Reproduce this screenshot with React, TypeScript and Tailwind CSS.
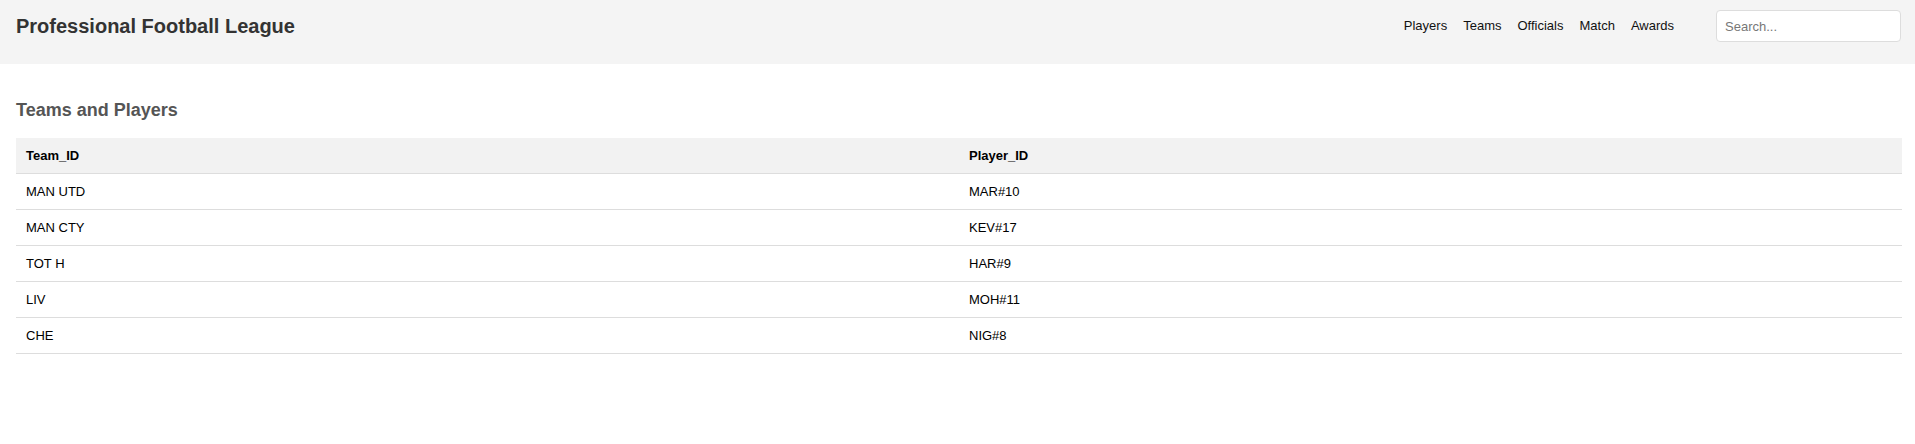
const rows = [
  { team: "MAN UTD", player: "MAR#10" },
  { team: "MAN CTY", player: "KEV#17" },
  { team: "TOT H", player: "HAR#9" },
  { team: "LIV", player: "MOH#11" },
  { team: "CHE", player: "NIG#8" },
];

const links = ["Players", "Teams", "Officials", "Match", "Awards"];

export default function App() {
  return (
    <div className="min-h-screen bg-white font-['Liberation_Sans',Arial,sans-serif]">
      <header className="h-16 bg-[#f4f4f4] pl-4 pr-[14px] pt-[10px]">
        <div className="flex h-8 items-center justify-between">
          <h1 className="text-[20px] font-bold leading-[23px] text-[#333]">Professional Football League</h1>
          <div className="flex items-center">
            <nav className="flex gap-4 text-[13px] text-[#111]">
              {links.map((l) => (
                <a key={l} href="#" className="hover:underline">
                  {l}
                </a>
              ))}
            </nav>
            <input
              type="text"
              placeholder="Search..."
              className="ml-[42px] h-8 w-[185px] rounded border border-[#ddd] bg-white px-2 text-[13px] text-[#222] outline-none placeholder:text-[#777]"
            />
          </div>
        </div>
      </header>

      <main className="pl-4 pr-[13px] pt-9">
        <h2 className="mb-[17px] text-[18px] font-bold leading-[21px] text-[#555]">Teams and Players</h2>
        <table className="w-full table-fixed border-collapse text-[13px] leading-[15px] text-black">
          <thead>
            <tr className="bg-[#f2f2f2]">
              <th className="border-b border-[#ddd] p-[10px] text-left font-bold">Team_ID</th>
              <th className="border-b border-[#ddd] p-[10px] text-left font-bold">Player_ID</th>
            </tr>
          </thead>
          <tbody>
            {rows.map((r) => (
              <tr key={r.team}>
                <td className="border-b border-[#ddd] p-[10px]">{r.team}</td>
                <td className="border-b border-[#ddd] p-[10px]">{r.player}</td>
              </tr>
            ))}
          </tbody>
        </table>
      </main>
    </div>
  );
}
